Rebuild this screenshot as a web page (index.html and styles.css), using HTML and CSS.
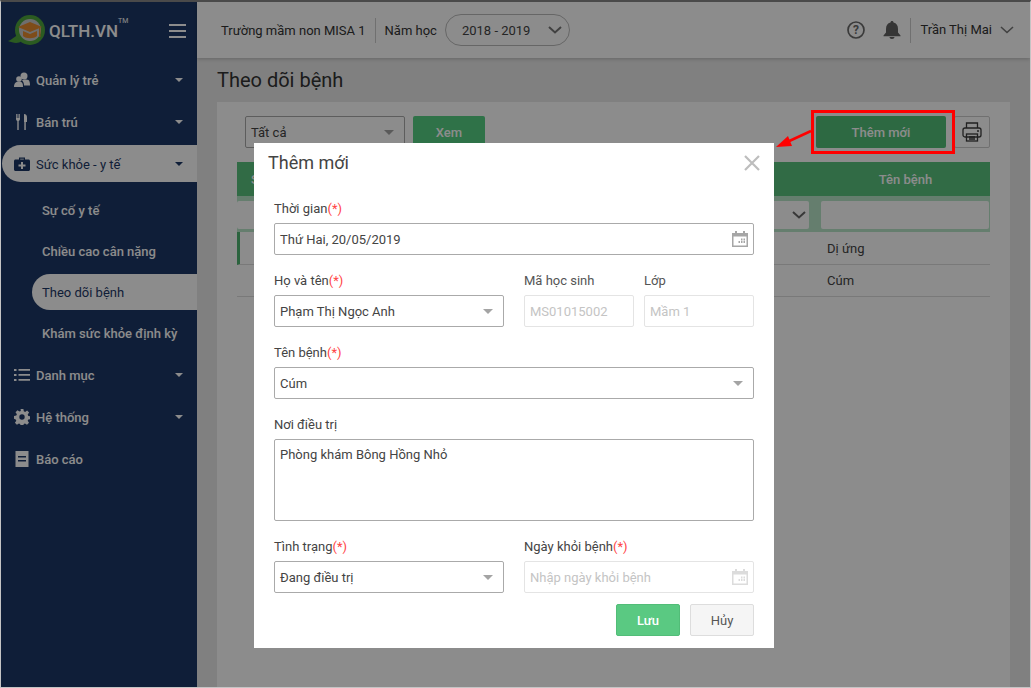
FILE: index.html
```html
<!DOCTYPE html>
<html lang="vi">
<head>
  <meta charset="UTF-8">
  <title>Theo dõi bệnh</title>
  <link rel="stylesheet" href="styles.css">
</head>
<body>
<div class="app">
  <aside class="sidebar">
    <div class="logo">
      <svg class="logo-mark" width="38" height="32" viewBox="0 0 38 32">
        <path d="M0 26c4-1 7-6 12-6l2 6c-4 3-9 2-14 0z" fill="#4fa63c"/>
        <circle cx="22" cy="15" r="15" fill="#4fa63c"/>
        <circle cx="22" cy="15" r="11" fill="#c9c9c9"/>
        <path d="M22 7l12 5-12 5-12-5z" fill="#e58a2e"/>
        <path d="M15 16l7 3 7-3v5c-3 3-11 3-14 0z" fill="#e58a2e"/>
        <path d="M31 13h1.500v9H31z" fill="#e58a2e"/>
      </svg>
      <span class="logo-text">QLTH.VN</span><span class="logo-tm">TM</span>
      <div class="burger"><i></i><i></i><i></i></div>
    </div>
    <ul class="nav">
      <li class="nav-item">
        <svg class="nav-icon" viewBox="0 0 16 16"><circle cx="10" cy="4" r="3.500"/><circle cx="5" cy="7" r="2.800"/><path d="M0 15c0-4 2-5.500 5-5.500s4 1.500 4 5.500z"/><path d="M8 8.500c1-1 5-1.500 6.500-.5 1 .8 1.500 2.500 1.500 5.500h-6c0-2-.5-4-2-5z"/></svg>
        <span>Quản lý trẻ</span><b class="caret"></b>
      </li>
      <li class="nav-item">
        <svg class="nav-icon" viewBox="0 0 16 16"><path d="M2 0h.8v4h.7V0h1v4h.7V0H6v5c0 1-.7 1.700-1.300 2v9H3.300V7C2.700 6.700 2 6 2 5z"/><path d="M10 0c2 0 3 1 3 4v4h-1.200v8h-1.500V8H10z"/></svg>
        <span>Bán trú</span><b class="caret"></b>
      </li>
      <li class="nav-item active">
        <svg class="nav-icon" viewBox="0 0 16 16"><path d="M5 1.500h6V4H9.800V2.800H6.200V4H5z"/><path fill-rule="evenodd" d="M1.500 3.500h13c.8 0 1.500.7 1.500 1.500v8.500c0 .8-.7 1.500-1.500 1.500h-13C.7 15 0 14.300 0 13.500V5c0-.8.7-1.500 1.500-1.500zM7 6v2.500H4.500v2H7V13h2v-2.500h2.500v-2H9V6z"/></svg>
        <span>Sức khỏe - y tế</span><b class="caret"></b>
      </li>
      <li class="sub-list">
        <div class="sub-item">Sự cố y tế</div>
        <div class="sub-item">Chiều cao cân nặng</div>
        <div class="sub-item active">Theo dõi bệnh</div>
        <div class="sub-item">Khám sức khỏe định kỳ</div>
      </li>
      <li class="nav-item">
        <svg class="nav-icon" viewBox="0 0 16 16"><path d="M0 2h2.500v2H0zM4.500 2H16v1.800H4.500zM0 7h2.500v2H0zM4.500 7H16v1.800H4.500zM0 12h2.500v2H0zM4.500 12H16v1.800H4.500z"/></svg>
        <span>Danh mục</span><b class="caret"></b>
      </li>
      <li class="nav-item">
        <svg class="nav-icon" viewBox="0 0 16 16"><path fill-rule="evenodd" d="M6.600 0h2.800l.4 2.300 1.300.6 2-1.300 2 2-1.400 2 .6 1.300 2.300.4v2.800l-2.300.4-.6 1.300 1.300 2-2 2-2-1.300-1.300.5-.3 2.300H6.600l-.4-2.300-1.300-.5-2 1.300-2-2 1.400-2-.6-1.300L-.1 9.700V6.900l2.400-.4.6-1.300-1.400-2 2-2 2 1.300 1.300-.6zM8 5.300a2.700 2.700 0 1 0 0 5.400 2.700 2.700 0 0 0 0-5.400z"/></svg>
        <span>Hệ thống</span><b class="caret"></b>
      </li>
      <li class="nav-item">
        <svg class="nav-icon" viewBox="0 0 16 16"><path fill-rule="evenodd" d="M1.500 0h13v16h-13zM4 5v1.600h8V5zm0 4v1.600h8V9z"/></svg>
        <span>Báo cáo</span>
      </li>
    </ul>
  </aside>

  <div class="main">
    <header class="topbar">
      <span class="school">Trường mầm non MISA 1</span>
      <span class="year-label">Năm học</span>
      <div class="year-pill">
        <span>2018 - 2019</span>
        <svg class="chevron" width="14" height="8" viewBox="0 0 14 8"><path d="M1 1l6 5.500L13 1" fill="none" stroke="#777" stroke-width="2"/></svg>
      </div>
      <svg class="help" width="18" height="18" viewBox="0 0 18 18"><circle cx="9" cy="9" r="8" fill="none" stroke="#6b6b6b" stroke-width="1.700"/><text x="9" y="13" text-anchor="middle" class="help-mark">?</text></svg>
      <svg class="bell" width="18" height="18" viewBox="0 0 18 18"><path d="M9 0c1 0 1.500.7 1.500 1.500C13.500 2.200 15 4.500 15 8v3.500l2.500 3v.7H.5v-.7l2.500-3V8c0-3.500 1.500-5.800 4.500-6.500C7.500.7 8 0 9 0zM6.500 16h5c0 1.200-1.100 2-2.500 2s-2.500-.8-2.500-2z" fill="#626262"/></svg>
      <span class="user">Trần Thị Mai</span>
      <svg class="chevron" width="14" height="8" viewBox="0 0 14 8"><path d="M1 1l6 5.500L13 1" fill="none" stroke="#777" stroke-width="1.600"/></svg>
    </header>

    <section class="content">
      <h1 class="page-title">Theo dõi bệnh</h1>
      <div class="card">
        <div class="toolbar">
          <div class="box filter-select"><span>Tất cả</span><b class="tri"></b></div>
          <button class="btn btn-green btn-view">Xem</button>
          <button class="btn btn-add">Thêm mới</button>
          <button class="btn-print">
            <svg width="20" height="20" viewBox="0 0 20 20" fill="none" stroke="#3c3c3c" stroke-width="1.300"><path d="M4.500 6V1h11v5"/><rect x="1" y="6" width="18" height="9" rx="2"/><rect x="4.500" y="12" width="11" height="7"/><path d="M7 15h6M7 17h6"/><path d="M15 9h2"/></svg>
          </button>
        </div>
        <div class="grid">
          <div class="grid-head"><span class="col-main">STT</span><span class="col-name">Tên bệnh</span></div>
          <div class="grid-filter">
            <div class="filter-main"><svg width="14" height="8" viewBox="0 0 14 8"><path d="M1 1l6 5.500L13 1" fill="none" stroke="#666" stroke-width="2"/></svg></div>
            <div class="filter-name"></div>
          </div>
          <div class="grid-row selected"><span class="col-main"></span><span class="col-name">Dị ứng</span></div>
          <div class="grid-row"><span class="col-main"></span><span class="col-name">Cúm</span></div>
        </div>
      </div>
    </section>
  </div>

  <div class="overlay"></div>

  <div class="mark-box"></div>
  <svg class="mark-arrow" width="40" height="22" viewBox="0 0 40 22">
    <path d="M36 2L10 14" stroke="#f00" stroke-width="2.500"/>
    <path d="M1 18L13 7l4 10z" fill="#f00"/>
  </svg>

  <div class="modal">
    <div class="modal-head">
      <span class="modal-title">Thêm mới</span>
      <svg class="modal-close" width="16" height="16" viewBox="0 0 16 16"><path d="M1 1l14 14M15 1L1 15" stroke="#bdbdbd" stroke-width="2.200"/></svg>
    </div>
    <div class="modal-body">
      <div class="field">
        <label>Thời gian<em>(*)</em></label>
        <div class="box"><span>Thứ Hai, 20/05/2019</span>
          <svg class="cal" width="16" height="16" viewBox="0 0 16 16"><path fill-rule="evenodd" d="M3 0h2v2h6V0h2v2h3v14H0V2h3zM1.500 5.500v9h13v-9zM9 10h1.500v2H9zm2.500 0H13v2h-1.500zm0-2.500H13v2h-1.500zM9 7.500h1.500v2H9zm-2.500 2.500H8v2H6.500z" fill="#a6a6a6"/></svg>
        </div>
      </div>
      <div class="field-row">
        <div class="field w230">
          <label>Họ và tên<em>(*)</em></label>
          <div class="box"><span>Phạm Thị Ngọc Anh</span><b class="tri"></b></div>
        </div>
        <div class="field w110 ml20">
          <label class="muted">Mã học sinh</label>
          <div class="box off"><span>MS01015002</span></div>
        </div>
        <div class="field w110 ml10">
          <label class="muted">Lớp</label>
          <div class="box off"><span>Mầm 1</span></div>
        </div>
      </div>
      <div class="field">
        <label>Tên bệnh<em>(*)</em></label>
        <div class="box"><span>Cúm</span><b class="tri"></b></div>
      </div>
      <div class="field">
        <label>Nơi điều trị</label>
        <div class="box area"><span>Phòng khám Bông Hồng Nhỏ</span></div>
      </div>
      <div class="field-row">
        <div class="field w230">
          <label>Tình trạng<em>(*)</em></label>
          <div class="box"><span>Đang điều trị</span><b class="tri"></b></div>
        </div>
        <div class="field w230 ml20">
          <label>Ngày khỏi bệnh<em>(*)</em></label>
          <div class="box off"><span>Nhập ngày khỏi bệnh</span>
            <svg class="cal" width="16" height="16" viewBox="0 0 16 16"><path fill-rule="evenodd" d="M3 0h2v2h6V0h2v2h3v14H0V2h3zM1.500 5.500v9h13v-9zM9 10h1.500v2H9zm2.500 0H13v2h-1.500zm0-2.500H13v2h-1.500zM9 7.500h1.500v2H9zm-2.500 2.500H8v2H6.500z" fill="#dcdcdc"/></svg>
          </div>
        </div>
      </div>
      <div class="modal-foot">
        <button class="btn btn-save">Lưu</button>
        <button class="btn btn-cancel">Hủy</button>
      </div>
    </div>
  </div>
</div>
</body>
</html>
```

FILE: styles.css
```css
* {
  box-sizing: border-box;
}

html, body {
  margin: 0;
  padding: 0;
}

body {
  width: 1031px;
  height: 688px;
  overflow: hidden;
  font-family: Roboto, "Noto Sans", sans-serif;
  font-size: 13px;
  color: #333;
  background: #d0d0d0;
}

.app {
  position: relative;
  display: flex;
  width: 1031px;
  height: 688px;
  border-top: 2px solid #4a4a4a;
  border-left: 1px solid #c4c4c4;
  border-right: 1px solid #c4c4c4;
  border-bottom: 1px solid #c4c4c4;
  overflow: hidden;
}

.overlay {
  position: absolute;
  top: 0;
  left: 0;
  right: 0;
  bottom: 0;
  background: rgba(0, 0, 0, .45);
}

/* sidebar */
.sidebar {
  width: 196px;
  flex: none;
  background: #1d3866;
  color: #fff;
}

.logo {
  display: flex;
  align-items: center;
  height: 57px;
  padding-left: 7px;
}

.logo-text {
  margin-left: 3px;
  font-size: 17px;
  font-weight: 500;
  color: #fff;
}

.logo-tm {
  align-self: flex-start;
  margin-top: 15px;
  font-size: 7px;
}

.burger {
  margin-left: auto;
  margin-right: 11px;
  width: 17px;
}

.burger i {
  display: block;
  height: 2px;
  margin: 4px 0;
  background: #fff;
}

.nav {
  list-style: none;
  margin: 0;
  padding: 0;
}

.nav-item {
  display: flex;
  align-items: center;
  height: 42px;
  padding-left: 13px;
  font-weight: 500;
}

.nav-icon {
  width: 16px;
  height: 16px;
  margin-right: 6px;
  fill: #fff;
}

.nav-item .caret {
  margin-left: auto;
  margin-right: 14px;
  border-left: 4px solid transparent;
  border-right: 4px solid transparent;
  border-top: 4px solid #fff;
}

.nav-item.active {
  position: relative;
  color: #1d3866;
  font-weight: 400;
  z-index: 0;
}

.nav-item.active::before {
  content: "";
  position: absolute;
  z-index: -1;
  left: 1px;
  right: 0;
  top: 2px;
  bottom: 3px;
  background: #fff;
  border-radius: 19px 0 0 19px;
}

.nav-item.active .nav-icon {
  fill: #1d3866;
}

.nav-item.active .caret {
  border-top-color: #1d3866;
}

.sub-list {
  padding-top: 5px;
}

.sub-item {
  display: flex;
  align-items: center;
  height: 41px;
  padding-left: 41px;
  font-weight: 500;
}

.sub-item.active {
  height: 36px;
  margin: 2px 0 3px 31px;
  padding-left: 10px;
  background: #fff;
  color: #1d3866;
  font-weight: 400;
  border-radius: 18px 0 0 18px;
}

/* top */
.main {
  flex: 1;
  display: flex;
  flex-direction: column;
  min-width: 0;
  background: #e9e9e9;
}

.topbar {
  display: flex;
  align-items: center;
  height: 56px;
  flex: none;
  padding-left: 24px;
  background: #fff;
  box-shadow: 0 1px 4px rgba(0, 0, 0, .2);
}

.school {
  padding-right: 9px;
  margin-right: 9px;
  height: 25px;
  line-height: 25px;
  border-right: 1px solid #ccc;
}

.year-pill {
  display: flex;
  align-items: center;
  width: 125px;
  height: 32px;
  margin-left: 8px;
  padding-left: 16px;
  border: 1px solid #bbb;
  border-radius: 16px;
  color: #444;
}

.year-pill .chevron {
  margin-left: 18px;
}

.help {
  margin-left: auto;
}

.help-mark {
  font-size: 12px;
  font-weight: 700;
  fill: #6b6b6b;
}

.bell {
  margin-left: 18px;
  margin-right: 9px;
}

.user {
  height: 25px;
  line-height: 24px;
  padding-left: 9px;
  border-left: 1px solid #ccc;
  margin-right: 8px;
}

.topbar > .chevron {
  margin-right: 16px;
}

/* content */
.content {
  flex: 1;
  padding: 0 20px;
  display: flex;
  flex-direction: column;
}

.page-title {
  margin: 0;
  height: 44px;
  line-height: 44px;
  font-size: 20px;
  font-weight: 400;
  color: #333;
}

.card {
  flex: 1;
  background: #fff;
  padding: 14px 20px;
}

.toolbar {
  display: flex;
  align-items: center;
  height: 32px;
  padding-left: 8px;
}

.box {
  display: flex;
  align-items: center;
  justify-content: space-between;
  height: 32px;
  padding: 0 5px;
  background: #fff;
  border: 1px solid #aaa;
  border-radius: 2px;
  color: #444;
}

.tri {
  margin-right: 5px;
  border-left: 5px solid transparent;
  border-right: 5px solid transparent;
  border-top: 5px solid #a4a4a4;
}

.filter-select {
  width: 160px;
  font-size: 13px;
}

.btn {
  height: 32px;
  padding: 0;
  border: 1px solid transparent;
  border-radius: 2px;
  font-family: inherit;
  font-size: 13px;
  font-weight: 500;
}

.btn-green {
  color: #fff;
  background: #56d084;
}

.btn-view {
  width: 72px;
  margin-left: 8px;
}

.btn-add {
  width: 130px;
  margin-left: auto;
  color: #fff;
  background: #52bf78;
}

.btn-print {
  display: flex;
  align-items: center;
  justify-content: center;
  width: 36px;
  height: 32px;
  margin-left: 8px;
  padding: 0;
  background: #fff;
  border: 1px solid #ccc;
  border-radius: 2px;
}

.grid {
  margin-top: 14px;
}

.grid-head {
  display: flex;
  align-items: center;
  height: 34px;
  background: #59c47f;
  color: #fff;
  font-weight: 500;
}

.col-main {
  flex: 1;
  padding-left: 14px;
}

.col-name {
  width: 169px;
}

.grid-head .col-name {
  text-align: center;
}

.grid-filter {
  display: flex;
  height: 36px;
  padding: 5px 1px 3px 0;
  background: #b8e6c8;
  border-bottom: 0;
}

.filter-main {
  flex: 1;
  display: flex;
  align-items: center;
  justify-content: flex-end;
  padding-right: 3px;
  background: #fff;
  border-radius: 2px;
}

.filter-name {
  width: 168px;
  margin-left: 12px;
  background: #fff;
  border-radius: 2px;
}

.grid-row {
  display: flex;
  align-items: center;
  height: 33px;
  border-bottom: 1px solid #ddd;
  color: #444;
}

.grid-row + .grid-row {
  height: 32px;
}

.grid-row.selected {
  border-left: 3px solid #4fb472;
  background: #fff;
}

.grid-row .col-name {
  padding-left: 6px;
}

/* annotation */
.mark-box {
  position: absolute;
  left: 810px;
  top: 108px;
  width: 144px;
  height: 44px;
  border: 3px solid #f00;
}

.mark-arrow {
  position: absolute;
  left: 774px;
  top: 127px;
}

/* dialog */
.modal {
  position: absolute;
  left: 253px;
  top: 141px;
  width: 520px;
  height: 505px;
  background: #fff;
}

.modal-head {
  display: flex;
  align-items: center;
  justify-content: space-between;
  height: 38px;
  padding: 0 14px;
}

.modal-title {
  font-size: 18px;
  color: #444;
}

.modal-close {
  margin-top: 2px;
}

.modal-body {
  padding: 20px 20px 0;
}

.field {
  margin-bottom: 18px;
}

.field label {
  display: block;
  height: 16px;
  line-height: 16px;
  margin-bottom: 6px;
  color: #444;
}

.field label.muted {
  color: #555;
}

.field em {
  font-style: normal;
  color: #f44;
}

.field-row {
  display: flex;
}

.w230 {
  width: 230px;
}

.w110 {
  width: 110px;
}

.ml20 {
  margin-left: 20px;
}

.ml10 {
  margin-left: 10px;
}

.box.off {
  border-color: #e4e4e4;
  color: #c4c4c4;
}

.box.area {
  height: 82px;
  align-items: flex-start;
  padding-top: 7px;
}

.cal {
  margin-right: 0;
}

.modal-foot {
  display: flex;
  justify-content: flex-end;
  margin-top: -7px;
}

.btn-save {
  width: 64px;
  color: #fff;
  background: #5ac982;
  border-color: #52bd78;
}

.btn-cancel {
  width: 64px;
  margin-left: 10px;
  color: #555;
  font-weight: 400;
  background: #f5f5f5;
  border-color: #ddd;
}
```
